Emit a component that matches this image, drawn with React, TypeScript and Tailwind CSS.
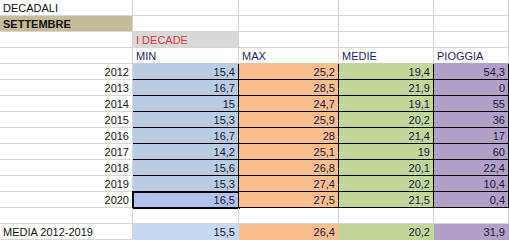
const years: [string, string, string, string, string][] = [
  ['2012', '15,4', '25,2', '19,4', '54,3'],
  ['2013', '16,7', '28,5', '21,9', '0'],
  ['2014', '15', '24,7', '19,1', '55'],
  ['2015', '15,3', '25,9', '20,2', '36'],
  ['2016', '16,7', '28', '21,4', '17'],
  ['2017', '14,2', '25,1', '19', '60'],
  ['2018', '15,6', '26,8', '20,1', '22,4'],
  ['2019', '15,3', '27,4', '20,2', '10,4'],
  ['2020', '16,5', '27,5', '21,5', '0,4'],
];

const row = 'grid h-[16px] grid-cols-[133px_106px_100px_95px_75px]';
const cell = 'box-border overflow-hidden whitespace-nowrap border-b border-r px-[3px] pt-[2px] leading-[13px]';
const grid = 'border-[#d6d6d6]';

function Blank({ className = '' }: { className?: string }) {
  return <div className={`${cell} ${grid} ${className}`} />;
}

export default function App() {
  return (
    <div className="h-[240px] w-[509px] overflow-hidden bg-white font-['Liberation_Sans',Arial,sans-serif] text-[11px] text-[#111]">
      <div className={row}>
        <div className={`${cell} ${grid}`}>DECADALI</div>
        <Blank />
        <Blank />
        <Blank />
        <Blank />
      </div>

      <div className={row}>
        <div className={`${cell} ${grid} bg-[#c4bd97] font-bold`}>SETTEMBRE</div>
        <Blank />
        <Blank />
        <Blank />
        <Blank />
      </div>

      <div className={row}>
        <Blank />
        <div className={`${cell} ${grid} bg-[#d9d9d9] text-[#e0393e]`}>I DECADE</div>
        <Blank />
        <Blank />
        <Blank />
      </div>

      <div className={`${row} text-[#1f1f5a]`}>
        <Blank />
        <div className={`${cell} border-r-[#d6d6d6] border-b-[#b8cce4]`}>MIN</div>
        <div className={`${cell} border-r-[#d6d6d6] border-b-[#fabf8f]`}>MAX</div>
        <div className={`${cell} border-r-[#d6d6d6] border-b-[#c4d79b]`}>MEDIE</div>
        <div className={`${cell} border-r-[#d6d6d6] border-b-[#b1a0c7]`}>PIOGGIA</div>
      </div>

      {years.map(([year, min, max, avg, rain]) => {
        const selected = year === '2020';
        return (
          <div key={year} className={row}>
            <div className={`${cell} ${grid} text-right`}>{year}</div>
            <div
              className={`${cell} border-black text-right text-[#16163a] ${
                selected ? 'bg-[#b1c2ea] outline-2 -outline-offset-1 outline-black' : 'bg-[#b8cce4]'
              }`}
            >
              {min}
            </div>
            <div className={`${cell} border-black bg-[#fabf8f] text-right text-[#16163a]`}>{max}</div>
            <div className={`${cell} border-black bg-[#c4d79b] text-right text-[#16163a]`}>{avg}</div>
            <div className={`${cell} border-black bg-[#b1a0c7] text-right text-[#16163a]`}>{rain}</div>
          </div>
        );
      })}

      <div className={row}>
        <Blank />
        <Blank />
        <Blank />
        <Blank />
        <Blank />
      </div>

      <div className={`${row} text-[#16163a]`}>
        <div className={`${cell} ${grid} text-[#111]`}>MEDIA 2012-2019</div>
        <div className={`${cell} border-[#c5d9f1] bg-[#c5d9f1] text-right`}>15,5</div>
        <div className={`${cell} border-[#fabf8f] bg-[#fabf8f] text-right`}>26,4</div>
        <div className={`${cell} border-[#c4d79b] bg-[#c4d79b] text-right`}>20,2</div>
        <div className={`${cell} border-[#b1a0c7] bg-[#b1a0c7] text-right`}>31,9</div>
      </div>
    </div>
  );
}
